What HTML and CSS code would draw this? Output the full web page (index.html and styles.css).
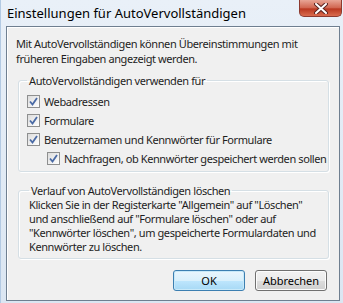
FILE: index.html
```html
<!DOCTYPE html>
<html lang="de">
<head>
    <meta charset="UTF-8">
    <title>Einstellungen für AutoVervollständigen</title>
    <link rel="stylesheet" href="styles.css">
</head>
<body>

    <div class="window">
        <!-- Title bar -->
        <div class="titlebar">
            <span class="title">Einstellungen für AutoVervollständigen</span>
            <span class="close">
                <svg width="14" height="11" viewBox="0 0 14 11">
                    <path d="M2 1 L12 10 M12 1 L2 10" stroke="#5a2420" stroke-width="4" stroke-linecap="round"/>
                    <path d="M2 1 L12 10 M12 1 L2 10" stroke="#ffffff" stroke-width="2" stroke-linecap="round"/>
                </svg>
            </span>
        </div>

        <!-- Dialog body -->
        <div class="dialog">
            <p class="intro">Mit AutoVervollständigen können Übereinstimmungen mit<br>früheren Eingaben angezeigt werden.</p>

            <fieldset class="group">
                <legend>AutoVervollständigen verwenden für</legend>
                <div class="check"><span class="box"><svg width="9" height="9" viewBox="0 0 9 9"><path d="M1 4.5 L3.5 7.5 L8 1" fill="none" stroke="#4a6aa5" stroke-width="1.8"/></svg></span>Webadressen</div>
                <div class="check"><span class="box"><svg width="9" height="9" viewBox="0 0 9 9"><path d="M1 4.5 L3.5 7.5 L8 1" fill="none" stroke="#4a6aa5" stroke-width="1.8"/></svg></span>Formulare</div>
                <div class="check"><span class="box"><svg width="9" height="9" viewBox="0 0 9 9"><path d="M1 4.5 L3.5 7.5 L8 1" fill="none" stroke="#4a6aa5" stroke-width="1.8"/></svg></span>Benutzernamen und Kennwörter für Formulare</div>
                <div class="check sub"><span class="box"><svg width="9" height="9" viewBox="0 0 9 9"><path d="M1 4.5 L3.5 7.5 L8 1" fill="none" stroke="#4a6aa5" stroke-width="1.8"/></svg></span>Nachfragen, ob Kennwörter gespeichert werden sollen</div>
            </fieldset>

            <fieldset class="group history">
                <legend>Verlauf von AutoVervollständigen löschen</legend>
                <p>Klicken Sie in der Registerkarte "Allgemein" auf "Löschen"<br>und anschließend auf "Formulare löschen" oder auf<br>"Kennwörter löschen", um gespeicherte Formulardaten und<br>Kennwörter zu löschen.</p>
            </fieldset>

            <div class="buttons">
                <button class="default">OK</button>
                <button>Abbrechen</button>
            </div>
        </div>
    </div>

</body>
</html>
```

FILE: styles.css
```css
body {
    margin: 0;
    padding: 0;
    font-family: "Segoe UI", "Noto Sans", Arial, sans-serif;
    font-size: 11px;
    letter-spacing: -0.4px;
    color: #1e1e1e;
    background: #ffffff;
}

/* Window frame */
.window {
    width: 343px;
    height: 303px;
    box-sizing: border-box;
    padding: 0 3px 2px 5px;
    background: linear-gradient(to bottom, #e9f0f8, #dbe6f2);
    border-left: 1px solid #b3cae3;
}

/* Title bar */
.titlebar {
    height: 26px;
    display: flex;
    justify-content: space-between;
    align-items: flex-start;
}

.title {
    font-size: 13px;
    letter-spacing: 0;
    line-height: 26px;
    padding-left: 1px;
    color: #000;
}

.close {
    width: 43px;
    height: 17px;
    display: flex;
    align-items: center;
    justify-content: center;
    border: 1px solid #8d3a2f;
    border-top: none;
    border-radius: 0 0 5px 5px;
    box-sizing: border-box;
    background: linear-gradient(to bottom, #e8a595, #d0644e 50%, #b9371f 55%, #d96c4f);
    margin-right: -2px;
}

/* Dialog body */
.dialog {
    height: 275px;
    box-sizing: border-box;
    background: #f0f0f0;
    border: 1px solid #6f7f90;
    box-shadow: inset 1px 1px 0 #ffffff;
    display: flex;
    flex-direction: column;
}

.intro {
    margin: 9px 0 0 9px;
    line-height: 15px;
    white-space: nowrap;
}

/* Group boxes */
.group {
    margin: 7px 10px 0 11px;
    padding: 4px 0 3px 8px;
    border: 1px solid #d5dfe5;
    border-radius: 3px;
    box-shadow: inset 1px 1px 0 #ffffff, 1px 1px 0 #ffffff;
}

.group legend {
    padding: 0 2px;
    margin-left: 0;
    line-height: 15px;
}

.check {
    height: 19px;
    display: flex;
    align-items: center;
    white-space: nowrap;
}

.check.sub {
    padding-left: 20px;
}

.box {
    width: 11px;
    height: 11px;
    margin-right: 4px;
    border: 1px solid #8e8f8f;
    background: linear-gradient(135deg, #dcdcdc, #ffffff);
    display: flex;
    align-items: center;
    justify-content: center;
}

.history {
    margin-top: 11px;
    padding: 0 0 4px 10px;
}

.history p {
    margin: 0;
    line-height: 14px;
    white-space: nowrap;
}

/* Buttons */
.buttons {
    display: flex;
    justify-content: flex-end;
    gap: 10px;
    margin: 11px 12px 0 0;
}

button {
    width: 72px;
    height: 21px;
    font-family: inherit;
    font-size: 11px;
    letter-spacing: 0;
    color: #000;
    border: 1px solid #707070;
    border-radius: 3px;
    background: linear-gradient(to bottom, #f2f2f2, #ebebeb 50%, #dddddd 51%, #cfcfcf);
    box-shadow: inset 0 0 0 1px #fcfcfc;
}

button.default {
    border-color: #3c7fb1;
    background: linear-gradient(to bottom, #eaf6fd, #d9f0fc 50%, #bee6fd 51%, #a7d9f5);
    box-shadow: inset 0 0 0 1px #c8e9f9;
}
```
